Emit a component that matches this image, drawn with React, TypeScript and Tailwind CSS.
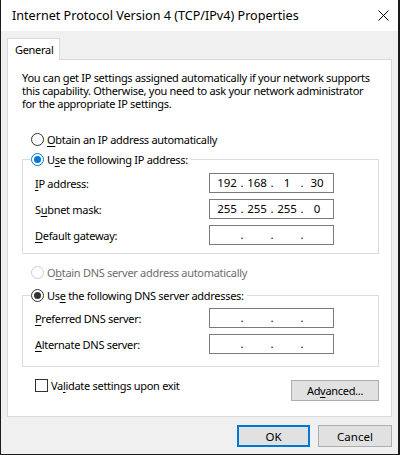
import React from "react";

const font = { fontFamily: '"Noto Sans", sans-serif' };

function Radio({ checked, color, disabled }: { checked?: boolean; color?: "blue" | "black"; disabled?: boolean }) {
  const ring = disabled ? "border-[#cccccc]" : color === "blue" ? "border-[#0078d7]" : "border-[#333333]";
  const dot = color === "blue" ? "bg-[#0078d7]" : "bg-[#333333]";
  return (
    <span className={`w-[13px] h-[13px] rounded-full border bg-white flex items-center justify-center shrink-0 ${ring}`}>
      {checked ? <span className={`w-[7px] h-[7px] rounded-full ${dot}`} /> : null}
    </span>
  );
}

function IpField({ parts }: { parts: string[] }) {
  return (
    <div className="w-[125px] h-[20px] border border-[#7a7a7a] bg-white flex items-center pl-[4px] text-[11.5px] leading-none tracking-normal">
      {parts.map((p, i) => (
        <React.Fragment key={i}>
          <span className="w-[26px] text-center">{p}</span>
          {i < 3 ? <span className="w-[4px] text-center">.</span> : null}
        </React.Fragment>
      ))}
    </div>
  );
}

function Row({ label, parts }: { label: React.ReactNode; parts: string[] }) {
  return (
    <div className="flex items-center justify-between h-[20px] pl-[12px] pr-[44px]">
      <span>{label}</span>
      <IpField parts={parts} />
    </div>
  );
}

const U = ({ children }: { children: React.ReactNode }) => <span className="underline underline-offset-[2px]">{children}</span>;

export default function App() {
  const empty = ["", "", "", ""];
  return (
    <div className="w-[400px] h-[455px] bg-[#f0f0f0] border-l border-b border-r-2 border-[#1a1a1a] flex flex-col text-black text-[11px] leading-[13px] tracking-[-0.3px]" style={font}>
      <div className="h-[31px] bg-white flex items-center justify-between pl-[11px] pr-[9px] shrink-0">
        <span className="text-[12.6px] tracking-normal">Internet Protocol Version 4 (TCP/IPv4) Properties</span>
        <svg width="11" height="11" viewBox="0 0 11 11">
          <path d="M0.5 0.5 L10.5 10.5 M10.5 0.5 L0.5 10.5" stroke="#000" strokeWidth="1" />
        </svg>
      </div>
      <div className="pl-[6px] pt-[7px] pr-[6px]">
        <div className="w-[53px] h-[22px] bg-white border border-b-0 border-[#d9d9d9] flex items-center pl-[7px] relative -mb-px">
          General
        </div>
        <div className="h-[358px] bg-white border border-[#d9d9d9] flex flex-col pl-[14px] pr-[12px]">
          <p className="mt-[11px] pr-[6px]">
            You can get IP settings assigned automatically if your network supports this capability. Otherwise, you need to ask your network administrator for the appropriate IP settings.
          </p>
          <div className="mt-[21px] h-[16px] flex items-center gap-[3px] pl-[9px]">
            <Radio />
            <span><U>O</U>btain an IP address automatically</span>
          </div>
          <fieldset className="mt-[4px] border border-[#dcdcdc] pt-[6px] pb-[8px] flex flex-col gap-[6px]">
            <legend className="ml-[8px] pr-[3px] h-[16px] flex items-center gap-[3px]">
              <Radio checked color="blue" />
              <span>U<U>s</U>e the following IP address:</span>
            </legend>
            <Row label={<><U>I</U>P address:</>} parts={["192", "168", "1", "30"]} />
            <Row label={<>S<U>u</U>bnet mask:</>} parts={["255", "255", "255", "0"]} />
            <Row label={<><U>D</U>efault gateway:</>} parts={empty} />
          </fieldset>
          <div className="mt-[10px] h-[16px] flex items-center gap-[3px] pl-[9px] text-[#6d6d6d]">
            <Radio disabled />
            <span>O<U>b</U>tain DNS server address automatically</span>
          </div>
          <fieldset className="mt-[7px] border border-[#dcdcdc] pt-[5px] pb-[12px] flex flex-col gap-[6px]">
            <legend className="ml-[8px] pr-[3px] h-[16px] flex items-center gap-[3px]">
              <Radio checked color="black" />
              <span>Us<U>e</U> the following DNS server addresses:</span>
            </legend>
            <Row label={<><U>P</U>referred DNS server:</>} parts={empty} />
            <Row label={<><U>A</U>lternate DNS server:</>} parts={empty} />
          </fieldset>
          <div className="mt-[12px] flex items-start justify-between">
            <div className="flex items-center gap-[3px] pl-[13px] h-[13px]">
              <span className="w-[13px] h-[13px] border border-[#333333] bg-white shrink-0" />
              <span>Va<U>l</U>idate settings upon exit</span>
            </div>
            <button className="mt-[1px] w-[88px] h-[21px] bg-[#e1e1e1] border border-[#adadad] flex items-center justify-center">
              Ad<U>v</U>anced...
            </button>
          </div>
        </div>
        <div className="flex justify-end gap-[8px] mt-[8px]">
          <button className="w-[73px] h-[22px] bg-[#e1e1e1] border-2 border-[#0078d7] flex items-center justify-center text-[11.5px] tracking-normal">OK</button>
          <button className="w-[74px] h-[22px] bg-[#e1e1e1] border border-[#adadad] flex items-center justify-center text-[11.5px] tracking-normal">Cancel</button>
        </div>
      </div>
    </div>
  );
}
